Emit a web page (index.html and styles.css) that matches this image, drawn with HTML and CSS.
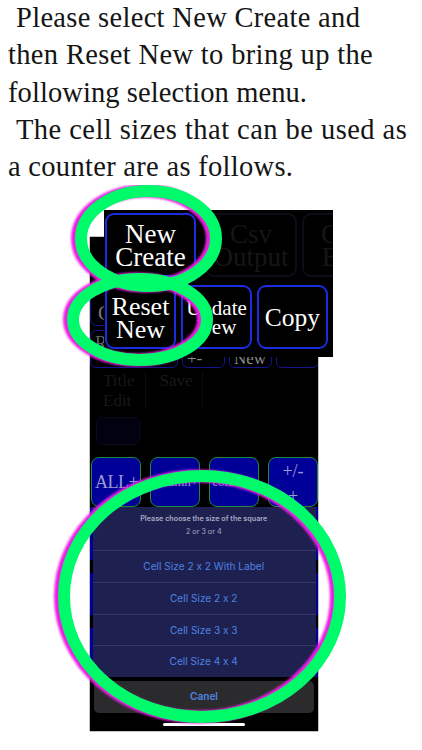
FILE: index.html
```html
<!DOCTYPE html>
<html lang="en">
<head>
<meta charset="utf-8">
<title>Counter help</title>
<link rel="stylesheet" href="styles.css">
</head>
<body>
<p class="caption"><span class="line indent l1">Please select New Create and</span><span class="line l2">then Reset New to bring up the</span><span class="line l3">following selection menu.</span><span class="line indent l4">The cell sizes that can be used as</span><span class="line l5">a counter are as follows.</span></p>
<div class="stage">
  <div class="phone">
    <div class="row-top">
      <div class="key key-outline"><span class="ghost-left">C</span></div>
    </div>
    <div class="row-mid">
      <div class="key key-outline key-wide"><span class="ghost-r">R</span></div>
      <div class="key key-outline key-cut"><span class="cut-label">+-</span></div>
      <div class="key key-outline key-cut"><span class="cut-label">New</span></div>
      <div class="key key-outline key-cut"></div>
    </div>
    <div class="row-dim">
      <div class="dim-label">Title<br>Edit</div>
      <div class="dim-label dim-box">Save</div>
    </div>
    <div class="dim-square"></div>
    <div class="row-blue">
      <div class="blue-key blue-large">ALL+</div>
      <div class="blue-key">column+</div>
      <div class="blue-key">column-</div>
      <div class="blue-key blue-stack">+/-<br>+</div>
    </div>
    <div class="sheet">
      <div class="sheet-group">
        <div class="sheet-head">
          <div class="sheet-title">Please choose the size of the square</div>
          <div class="sheet-sub">2 or 3 or 4</div>
        </div>
        <div class="sheet-item">Cell Size 2 x 2 With Label</div>
        <div class="sheet-item">Cell Size 2 x 2</div>
        <div class="sheet-item">Cell Size 3 x 3</div>
        <div class="sheet-item">Cell Size 4 x 4</div>
      </div>
      <div class="sheet-cancel">Canel</div>
    </div>
    <div class="home-bar"></div>
  </div>
  <div class="popup">
    <div class="popup-row">
      <div class="pop-key pop-new">New<br>Create</div>
      <div class="pop-key pop-faded">Csv<br>Output</div>
      <div class="pop-key pop-faded pop-clip">C<br>E</div>
    </div>
    <div class="popup-row popup-row-b">
      <div class="pop-key pop-reset">Reset<br>New</div>
      <div class="pop-key pop-update">Update<br>New</div>
      <div class="pop-key pop-copy">Copy</div>
    </div>
  </div>
  <svg class="rings" viewBox="0 0 422 560" aria-hidden="true">
    <defs>
      <filter id="glow" x="-10%" y="-10%" width="120%" height="120%"><feGaussianBlur stdDeviation="1.2"/></filter>
    </defs>
    <g fill="none" stroke="#f01ee6" stroke-width="13" filter="url(#glow)">
      <ellipse cx="145" cy="53.500" rx="67.500" ry="47.500"/>
      <ellipse cx="136.500" cy="134.500" rx="67" ry="40.500"/>
      <ellipse cx="198.500" cy="411.500" rx="138" ry="120.500"/>
    </g>
    <g fill="none" stroke="#00fb6a" stroke-width="12">
      <ellipse cx="148.500" cy="53.500" rx="67.500" ry="47.500"/>
      <ellipse cx="140" cy="134.500" rx="67" ry="40.500"/>
      <ellipse cx="202" cy="411.500" rx="138" ry="120.500"/>
    </g>
  </svg>
</div>
</body>
</html>
```
FILE: styles.css
```css
html, body { margin: 0; padding: 0; background: #fff; }
body { width: 422px; height: 750px; overflow: hidden; position: relative; }
.caption {
  margin: -1px 0 0;
  padding: 0 0 0 8px;
  height: 186px;
  box-sizing: border-box;
  font-family: "Liberation Serif", serif;
  font-size: 28.500px;
  line-height: 37.300px;
  color: #151515;
}
.line { display: block; white-space: nowrap; }
.indent { padding-left: 8px; }
.l1 { letter-spacing: 0.31px; }
.l2 { letter-spacing: 0.35px; }
.l3 { letter-spacing: 0.09px; }
.l4 { letter-spacing: 0.45px; }
.l5 { letter-spacing: 0.3px; }

.stage { position: relative; width: 422px; height: 565px; }

.phone {
  position: absolute;
  left: 90px;
  top: 52px;
  width: 228px;
  height: 494px;
  background: #000;
  box-shadow: 0 0 0 0.5px #888;
  font-family: "Liberation Serif", serif;
  overflow: hidden;
}
.row-top { height: 45px; padding-top: 48px; display: flex; }
.key { border: 1px solid #14148c; border-radius: 6px; box-sizing: border-box; position: relative; background: #000; }
.row-top .key { width: 40px; height: 41px; }
.ghost-left { color: #777; font-size: 20px; position: absolute; left: 7px; top: 16px; }
.row-mid { display: flex; gap: 4px; height: 38px; }
.row-mid .key { flex: 0 0 43px; height: 38px; border-radius: 6px; }
.row-mid .key-wide { flex: 0 0 88px; }
.ghost-r { color: #666; font-size: 18px; position: absolute; left: 4px; top: 2px; }
.cut-label { color: #8a8a8a; font-size: 17px; position: absolute; left: 4px; top: 18px; line-height: 20px; }
.row-dim { display: flex; gap: 10px; padding: 3px 0 0 13px; height: 46px; box-sizing: border-box; }
.dim-label { color: #181818; font-size: 17px; line-height: 20px; }
.dim-box { border-left: 1px solid #0c0c0c; border-right: 1px solid #0c0c0c; width: 58px; height: 38px; padding-left: 14px; box-sizing: border-box; }
.dim-square { width: 44px; height: 28px; margin: 3px 0 0 6px; border: 1px solid #0a0a1c; border-radius: 6px; background: #01010f; box-sizing: border-box; }
.row-blue { display: flex; gap: 9px; padding-left: 1px; margin-top: 12px; height: 50px; }
.blue-key {
  width: 50px;
  height: 50px;
  box-sizing: border-box;
  background: #000099;
  border: 1px solid #1e8a3c;
  border-radius: 8px;
  color: #9a9ad0;
  font-size: 13px;
  display: flex;
  align-items: center;
  justify-content: center;
  text-align: center;
  white-space: nowrap;
}
.blue-large { font-size: 18px; letter-spacing: -0.5px; justify-content: flex-start; padding-left: 3px; }
.blue-stack { font-size: 18px; line-height: 25px; align-items: flex-start; padding-top: 1px; }

.sheet {
  font-family: Inter, "Liberation Sans", sans-serif;
  font-feature-settings: "calt" 0;
  position: relative;
}
.sheet-group {
  background: #1e2050;
  margin: 0 2.500px 0 2px;
  position: relative;
}
.sheet-group::before,
.sheet-group::after {
  content: "";
  position: absolute;
  top: 0;
  bottom: 0;
  width: 2.500px;
  background: linear-gradient(#000099 0 53px, #000 53px 66px, #000099 66px 108px, #000 108px 121px, #000099 121px);
}
.sheet-group::before { left: -2px; }
.sheet-group::after { right: -2.500px; }
.sheet-head { height: 43px; text-align: center; color: #a9aac2; padding-top: 7px; box-sizing: border-box; }
.sheet-title { font-size: 7.200px; font-weight: 600; line-height: 10px; }
.sheet-sub { font-size: 7.200px; line-height: 10px; margin-top: 3px; }
.sheet-item {
  height: 31.750px;
  line-height: 30.500px;
  text-align: center;
  color: #4f82e2;
  font-size: 10.100px;
  box-sizing: border-box;
  border-top: 1px solid #35376b;
}
.sheet-cancel {
  margin: 4px 4px 0;
  height: 32px;
  line-height: 31px;
  border-radius: 5px;
  background: #2b2b2e;
  color: #4f82e2;
  font-size: 10.100px;
  font-weight: 600;
  text-align: center;
}
.home-bar {
  position: absolute;
  left: 73px;
  bottom: 5px;
  width: 82px;
  height: 3px;
  border-radius: 2px;
  background: #fff;
}

.popup {
  position: absolute;
  left: 104px;
  top: 25px;
  width: 229px;
  height: 147px;
  background: #000;
  overflow: hidden;
  font-family: "Liberation Serif", serif;
  box-sizing: border-box;
  padding-top: 3px;
}
.popup-row { display: flex; gap: 5px; height: 64px; padding-left: 1px; }
.popup-row-b { margin-top: 8px; gap: 5px; }
.pop-key {
  flex: none;
  box-sizing: border-box;
  border: 2px solid #1a2ce0;
  border-radius: 9px;
  color: #fff;
  display: flex;
  align-items: center;
  justify-content: center;
  text-align: center;
  height: 64px;
  padding-top: 1px;
}
.pop-new { width: 91px; font-size: 27px; line-height: 23px; margin-right: 4px; }
.pop-faded { width: 92px; font-size: 27px; line-height: 23px; color: #161616; border-color: #0c0c1a; }
.pop-clip { width: 60px; justify-content: flex-start; padding-left: 17px; }
.pop-reset { width: 71px; font-size: 26px; line-height: 23px; }
.pop-update { width: 71px; font-size: 21px; line-height: 19px; }
.pop-copy { width: 71px; font-size: 25.500px; }

.rings { position: absolute; left: 0; top: 0; width: 422px; height: 560px; pointer-events: none; }
```
